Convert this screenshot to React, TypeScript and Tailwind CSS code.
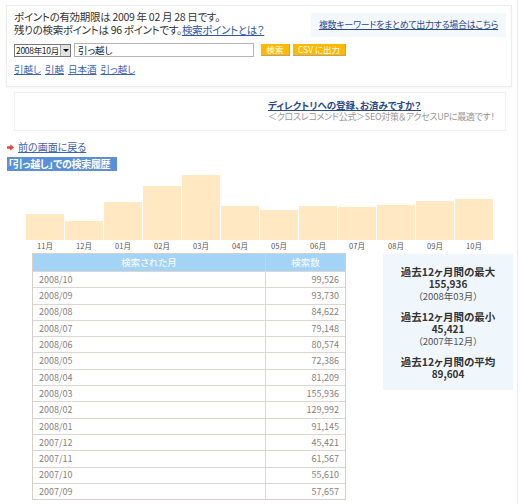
import React from 'react';

const FONT = "font-['Noto_Sans_CJK_JP',sans-serif] [font-feature-settings:'palt']";

const BARS = [
  { label: '11月', value: 61567 },
  { label: '12月', value: 45421 },
  { label: '01月', value: 91145 },
  { label: '02月', value: 129992 },
  { label: '03月', value: 155936 },
  { label: '04月', value: 81209 },
  { label: '05月', value: 72386 },
  { label: '06月', value: 80574 },
  { label: '07月', value: 79148 },
  { label: '08月', value: 84622 },
  { label: '09月', value: 93730 },
  { label: '10月', value: 99526 },
];

const ROWS = [
  ['2008/10', '99,526'],
  ['2008/09', '93,730'],
  ['2008/08', '84,622'],
  ['2008/07', '79,148'],
  ['2008/06', '80,574'],
  ['2008/05', '72,386'],
  ['2008/04', '81,209'],
  ['2008/03', '155,936'],
  ['2008/02', '129,992'],
  ['2008/01', '91,145'],
  ['2007/12', '45,421'],
  ['2007/11', '61,567'],
  ['2007/10', '55,610'],
  ['2007/09', '57,657'],
];

function RedArrow() {
  return (
    <svg width="7" height="7" viewBox="0 0 7 7" className="shrink-0">
      <path d="M0 2.2h3.2V0.2L7 3.5 3.2 6.8V4.8H0z" fill="#e8453c" />
    </svg>
  );
}

function Stat({ title, value, sub }: { title: string; value: string; sub?: string }) {
  return (
    <div className="flex flex-col items-center whitespace-nowrap">
      <div className="text-[10.5px] leading-[12px] font-bold text-[#333]">{title}</div>
      <div className="text-[10px] leading-[12px] font-bold text-[#333]">{value}</div>
      {sub && <div className="text-[9.5px] leading-[12px] text-[#555]">{sub}</div>}
    </div>
  );
}

export default function App() {
  const max = 155936;
  return (
    <div className={`w-[520px] h-[504px] bg-white overflow-hidden relative ${FONT}`}>
      <div className="absolute right-[2px] top-0 bottom-0 w-px bg-[#ececec]" />

      {/* top panel */}
      <div className="ml-[6px] mt-[5px] w-[506px] h-[82px] border border-[#ececec] bg-white shadow-[0_1px_2px_rgba(0,0,0,0.04)]">
        <div className="flex justify-between items-start">
          <div className="pl-[7px] pt-[4px] text-[10.5px] leading-[13px] tracking-[-0.3px] text-[#333] whitespace-nowrap">
            <div>ポイントの有効期限は 2009 年 02 月 28 日です。</div>
            <div>
              残りの検索ポイントは 96 ポイントです。
              <span className="text-[#2f56ad] underline">検索ポイントとは？</span>
            </div>
          </div>
          <div className="mt-[7px] mr-[5px] w-[195px] h-[24px] bg-[#f3f8fd] flex items-center justify-center">
            <span className="text-[9px] tracking-[-0.3px] whitespace-nowrap text-[#2b4a8c] underline">
              複数キーワードをまとめて出力する場合はこちら
            </span>
          </div>
        </div>

        <div className="flex items-center mt-[6px] pl-[7px]">
          <div className="w-[57px] h-[13px] border border-[#777] flex items-center bg-white">
            <span className="flex-1 text-[8.5px] leading-[11px] pl-[1px] text-[#222] whitespace-nowrap tracking-[-0.3px]">
              2008年10月
            </span>
            <span className="w-[10px] h-[11px] bg-[#e2e2e2] border-l border-[#aaa] flex items-center justify-center">
              <span className="w-0 h-0 border-l-[3px] border-r-[3px] border-t-[3px] border-l-transparent border-r-transparent border-t-black" />
            </span>
          </div>
          <div className="ml-[3px] w-[180px] h-[14px] border border-[#b5b5b5] flex items-center pl-[3px] text-[9.5px] text-[#222]">
            引っ越し
          </div>
          <div className="ml-[7px] w-[29px] h-[12px] bg-[#ffb900] border-r border-b border-[#b9a27a] flex items-center justify-center text-[8.5px] text-white whitespace-nowrap">
            検索
          </div>
          <div className="ml-[3px] w-[53px] h-[12px] bg-[#ffb900] border-r border-b border-[#b9a27a] flex items-center justify-center text-[8.5px] text-white whitespace-nowrap">
            CSV に出力
          </div>
        </div>

        <div className="flex gap-[4px] pl-[7px] mt-[6px] text-[9.5px] leading-[12px] text-[#3a62b5] underline whitespace-nowrap">
          <span>引越し</span>
          <span>引越</span>
          <span>日本酒</span>
          <span>引っ越し</span>
        </div>
      </div>

      {/* second panel */}
      <div className="ml-[14px] mt-[5px] w-[492px] h-[39px] border border-[#f0f0f0] pl-[253px] pt-[6px] whitespace-nowrap">
        <div className="text-[9.5px] leading-[12px] font-bold text-[#2b4a8c] underline">ディレクトリへの登録、お済みですか？</div>
        <div className="text-[9px] leading-[12px] tracking-[-0.3px] text-[#999]">＜クロスレコメンド公式＞SEO対策＆アクセスUPに最適です！</div>
      </div>

      {/* back link */}
      <div className="flex items-center gap-[4px] ml-[7px] mt-[10px] h-[12px]">
        <RedArrow />
        <span className="text-[10px] leading-[12px] text-[#3a62b5] underline whitespace-nowrap">前の画面に戻る</span>
      </div>

      {/* title */}
      <div className="ml-[7px] mt-[4px] w-[110px] h-[14px] bg-[#5a91d6] flex items-center pl-[1px] text-[10px] leading-[12px] tracking-[-0.3px] font-bold text-white whitespace-nowrap">
        「引っ越し」での検索履歴
      </div>

      {/* chart */}
      <div className="ml-[26px] flex h-[69px] items-end gap-px">
        {BARS.map((b) => (
          <div
            key={b.label}
            className="w-[38px] bg-[#ffe8c2]"
            style={{ height: Math.round((b.value / max) * 65) }}
          />
        ))}
      </div>
      <div className="ml-[26px] flex gap-px mt-[1px]">
        {BARS.map((b) => (
          <div key={b.label} className="w-[38px] text-center text-[7.5px] leading-[9px] text-[#555]">
            {b.label}
          </div>
        ))}
      </div>

      {/* table + stats */}
      <div className="flex items-start mt-[3px]">
        <div className="ml-[32px] w-[314px] border border-[#d8d0c8]">
          <div className="flex h-[17px] bg-[#a3d3f5] text-white text-[9.5px]">
            <div className="w-[233px] border-r border-[#d8d0c8] flex items-center justify-center">検索された月</div>
            <div className="flex-1 flex items-center justify-center">検索数</div>
          </div>
          {ROWS.map(([m, n]) => (
            <div key={m} className="flex h-[16.3px] border-t border-[#ddd6cf] text-[9px] text-[#8a817a]">
              <div className="w-[233px] border-r border-[#ddd6cf] flex items-center pl-[6px]">{m}</div>
              <div className="flex-1 flex items-center justify-end pr-[6px]">{n}</div>
            </div>
          ))}
        </div>

        <div className="ml-[37px] mt-[1px] w-[130px] h-[136px] bg-[#f0f7fc] pt-[12px] flex flex-col gap-[9px]">
          <Stat title="過去12ヶ月間の最大" value="155,936" sub="（2008年03月）" />
          <Stat title="過去12ヶ月間の最小" value="45,421" sub="（2007年12月）" />
          <Stat title="過去12ヶ月間の平均" value="89,604" />
        </div>
      </div>
    </div>
  );
}
